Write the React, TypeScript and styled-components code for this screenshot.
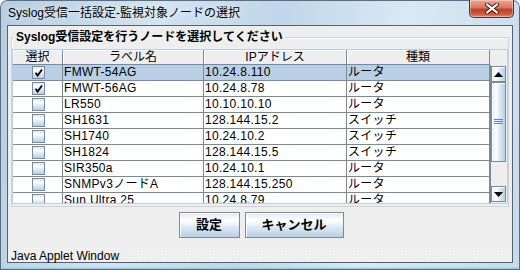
import React from 'react';
import styled, { createGlobalStyle } from 'styled-components';

const GlobalStyle = createGlobalStyle`
    html, body {
        margin: 0;
        padding: 0;
        background: #ffffff;
    }
    body {
        font-family: "Liberation Sans", "Noto Sans CJK JP", sans-serif;
        font-size: 12px;
        color: #000000;
    }
`;

const FONT = `"Liberation Sans", "Noto Sans CJK JP", sans-serif`;
const OCEAN_GRADIENT = (dir: string) =>
    `linear-gradient(${dir}, #dde8f3 0%, #ffffff 30%, #dde8f3 60%, #b8cfe5 100%)`;

interface IRow {
    checked: boolean;
    label: string;
    ip: string;
    kind: string;
}

const rows: IRow[] = [
    {checked: true, label: 'FMWT-54AG', ip: '10.24.8.110', kind: 'ルータ'},
    {checked: true, label: 'FMWT-56AG', ip: '10.24.8.78', kind: 'ルータ'},
    {checked: false, label: 'LR550', ip: '10.10.10.10', kind: 'ルータ'},
    {checked: false, label: 'SH1631', ip: '128.144.15.2', kind: 'スイッチ'},
    {checked: false, label: 'SH1740', ip: '10.24.10.2', kind: 'スイッチ'},
    {checked: false, label: 'SH1824', ip: '128.144.15.5', kind: 'スイッチ'},
    {checked: false, label: 'SIR350a', ip: '10.24.10.1', kind: 'ルータ'},
    {checked: false, label: 'SNMPv3ノードA', ip: '128.144.15.250', kind: 'ルータ'},
    {checked: false, label: 'Sun Ultra 25', ip: '10.24.8.79', kind: 'ルータ'},
];

const COLUMNS = '50px 141px 143px 143px';

const Window = styled.div`
    width: 520px;
    height: 270px;
    box-sizing: border-box;
    display: flex;
    flex-direction: column;
    padding: 0 7px 7px 7px;
    border-radius: 7px 7px 0 0;
    background:
        linear-gradient(0deg, #62bfd9 0px, #a6d3e4 2px, transparent 3px),
        linear-gradient(100deg, #b5cde3 0%, #d2e3f1 28%, #c0d6ea 50%, #d9e8f4 72%, #c6dbec 100%);
    box-shadow: inset 0 0 0 1px #5b6d7e;
    overflow: hidden;
`;

const TitleBar = styled.div`
    height: 25px;
    flex: none;
    display: flex;
    justify-content: space-between;
    align-items: flex-start;
`;

const Title = styled.div`
    margin: 5px 0 0 1px;
    font-family: ${FONT};
    font-size: 12px;
    line-height: 16px;
    color: #000000;
    white-space: nowrap;
    text-shadow: 0 0 6px rgba(255, 255, 255, 0.9);
`;

const CloseButton = styled.div`
    width: 45px;
    height: 18px;
    margin-right: -1px;
    box-sizing: border-box;
    border: 1px solid #6e2a20;
    border-top: none;
    border-radius: 0 0 5px 5px;
    background: linear-gradient(180deg, #e9a898 0%, #d67763 45%, #c0402a 55%, #c9553c 80%, #e08a68 100%);
    box-shadow: inset 0 0 0 1px rgba(255, 255, 255, 0.35);
    display: flex;
    align-items: center;
    justify-content: center;
`;

const Client = styled.div`
    flex: 1;
    display: flex;
    flex-direction: column;
    background: #eeeeee;
    border: 1px solid #55626f;
    min-height: 0;
`;

const Group = styled.fieldset`
    margin: 4px 3px 0 3px;
    padding: 4px 0 2px 0;
    border: 1px solid #cfd4d9;
    box-shadow: 1px 1px 0 #ffffff inset;
    min-width: 0;
`;

const GroupTitle = styled.legend`
    margin-left: 2px;
    padding: 0 2px;
    font-family: ${FONT};
    font-size: 12px;
    font-weight: bold;
    line-height: 15px;
    color: #000000;
`;

const ScrollPane = styled.div`
    border: 1px solid #b8cfe5;
    display: grid;
    grid-template-columns: 477px 17px;
    grid-template-rows: 15px 138px;
    background: #ffffff;
`;

const HeaderRow = styled.div`
    display: grid;
    grid-template-columns: ${COLUMNS};
    background: #eeeeee;
`;

const HeaderCell = styled.div`
    box-sizing: border-box;
    height: 15px;
    border-right: 1px solid #7a8a99;
    border-bottom: 1px solid #7a8a99;
    box-shadow: inset 1px 1px 0 #ffffff;
    text-align: center;
    font-family: ${FONT};
    font-size: 12px;
    line-height: 14px;
    white-space: nowrap;
    overflow: hidden;
`;

const Corner = styled.div`
    background: #eeeeee;
`;

const Viewport = styled.div`
    overflow: hidden;
    background: #ffffff;
`;

const Row = styled.div<{$selected: boolean}>`
    display: grid;
    grid-template-columns: ${COLUMNS};
    height: 16px;
    background: ${(p) => (p.$selected ? '#b8cfe5' : '#ffffff')};
`;

const Cell = styled.div<{$center?: boolean}>`
    box-sizing: border-box;
    height: 16px;
    border-right: 1px solid #7a8a99;
    border-bottom: 1px solid #7a8a99;
    padding-left: 1px;
    display: flex;
    align-items: center;
    justify-content: ${(p) => (p.$center ? 'center' : 'flex-start')};
    font-family: ${FONT};
    font-size: 12px;
    line-height: 15px;
    letter-spacing: 0.3px;
    white-space: nowrap;
    overflow: hidden;
`;

const CheckBox = styled.div`
    width: 13px;
    height: 13px;
    box-sizing: border-box;
    border: 1px solid #7a8a99;
    background: ${OCEAN_GRADIENT('180deg')};
    display: flex;
    align-items: center;
    justify-content: center;
    margin-top: -1px;
`;

const ScrollBar = styled.div`
    display: flex;
    flex-direction: column;
    background: #eeeeee;
    border-left: 1px solid #7a8a99;
    padding: 1px 1px 1px 0;
`;

const ArrowButton = styled.div`
    height: 16px;
    flex: none;
    box-sizing: border-box;
    border: 1px solid #7a8a99;
    box-shadow: inset 1px 1px 0 #ffffff;
    background: ${OCEAN_GRADIENT('90deg')};
    display: flex;
    align-items: center;
    justify-content: center;
`;

const Thumb = styled.div`
    height: 80px;
    flex: none;
    box-sizing: border-box;
    border: 1px solid #7a8a99;
    box-shadow: inset 1px 1px 0 #ffffff;
    background: ${OCEAN_GRADIENT('90deg')};
    display: flex;
    align-items: center;
    justify-content: center;
`;

const Track = styled.div`
    flex: 1;
`;

const ButtonBar = styled.div`
    display: flex;
    justify-content: center;
    gap: 5px;
    margin-top: 5px;
    padding-left: 2px;
`;

const PushButton = styled.button<{$width: number}>`
    width: ${(p) => p.$width}px;
    height: 26px;
    box-sizing: border-box;
    padding: 0;
    border: 1px solid #7a8a99;
    box-shadow: inset 1px 1px 0 #ffffff;
    background: ${OCEAN_GRADIENT('180deg')};
    font-family: ${FONT};
    font-size: 13px;
    font-weight: bold;
    color: #000000;
    line-height: 24px;
`;

const StatusBar = styled.div`
    margin-top: auto;
    height: 13px;
    padding: 2px 0 0 3px;
    font-family: ${FONT};
    font-size: 12px;
    line-height: 14px;
    color: #000000;
    background-color: #eeeeee;
    background-image: radial-gradient(circle, #f8f8f8 0.8px, transparent 1px);
    background-size: 3px 3px;
`;

const CheckMark = () => (
    <svg width='9' height='9' viewBox='0 0 9 9'>
        <path d='M1.5 4.8 L3.6 7.6 L8 1.5' fill='none' stroke='#000' strokeWidth='1.8' />
    </svg>
);

const Arrow = ({up}: {up: boolean}) => (
    <svg width='9' height='5' viewBox='0 0 9 5'>
        <path d={up ? 'M0 5 L4.5 0 L9 5 Z' : 'M0 0 L9 0 L4.5 5 Z'} fill='#000' />
    </svg>
);

const Grip = () => (
    <svg width='9' height='6' viewBox='0 0 9 6'>
        <path d='M0 0.5 H9 M0 2.5 H9 M0 4.5 H9' stroke='#6382bf' strokeWidth='1' />
    </svg>
);

const CloseGlyph = () => (
    <svg width='14' height='11' viewBox='0 0 14 11'>
        <path d='M2 1.5 L12 9.5 M12 1.5 L2 9.5' stroke='#4b1a12' strokeWidth='4' strokeLinecap='round' />
        <path d='M2 1.5 L12 9.5 M12 1.5 L2 9.5' stroke='#ffffff' strokeWidth='2.2' strokeLinecap='round' />
    </svg>
);

export default function App() {
    return (
        <>
            <GlobalStyle />
            <Window>
                <TitleBar>
                    <Title>Syslog受信一括設定-監視対象ノードの選択</Title>
                    <CloseButton>
                        <CloseGlyph />
                    </CloseButton>
                </TitleBar>
                <Client>
                    <Group>
                        <GroupTitle>Syslog受信設定を行うノードを選択してください</GroupTitle>
                        <ScrollPane>
                            <HeaderRow>
                                <HeaderCell>選択</HeaderCell>
                                <HeaderCell>ラベル名</HeaderCell>
                                <HeaderCell>IPアドレス</HeaderCell>
                                <HeaderCell>種類</HeaderCell>
                            </HeaderRow>
                            <Corner />
                            <Viewport>
                                {rows.map((row, i) => (
                                    <Row key={row.label} $selected={i === 0}>
                                        <Cell $center>
                                            <CheckBox>{row.checked && <CheckMark />}</CheckBox>
                                        </Cell>
                                        <Cell>{row.label}</Cell>
                                        <Cell>{row.ip}</Cell>
                                        <Cell>{row.kind}</Cell>
                                    </Row>
                                ))}
                            </Viewport>
                            <ScrollBar>
                                <ArrowButton>
                                    <Arrow up />
                                </ArrowButton>
                                <Thumb>
                                    <Grip />
                                </Thumb>
                                <Track />
                                <ArrowButton>
                                    <Arrow up={false} />
                                </ArrowButton>
                            </ScrollBar>
                        </ScrollPane>
                    </Group>
                    <ButtonBar>
                        <PushButton $width={61}>設定</PushButton>
                        <PushButton $width={99}>キャンセル</PushButton>
                    </ButtonBar>
                    <StatusBar>Java Applet Window</StatusBar>
                </Client>
            </Window>
        </>
    );
}
